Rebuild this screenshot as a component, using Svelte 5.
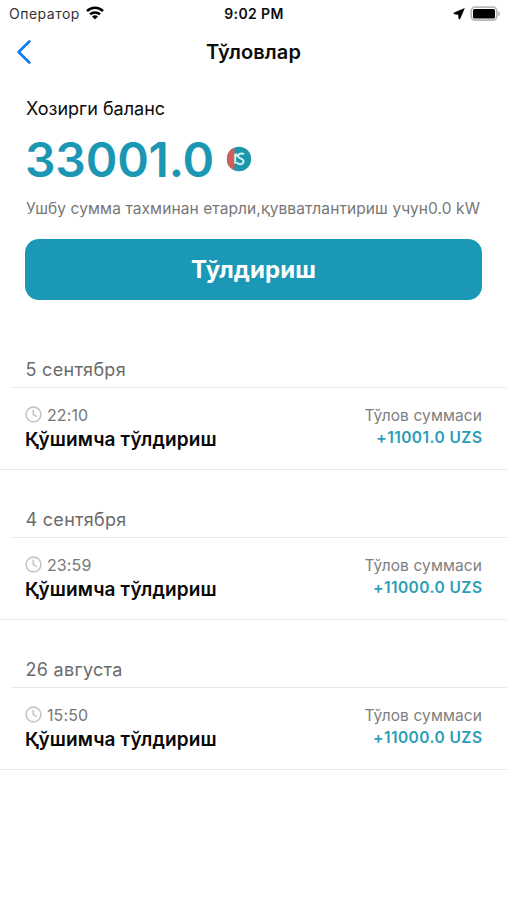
<script>
    const balance = "33001.0";
    const groups = [
        { date: "5 сентября", items: [{ time: "22:10", title: "Қўшимча тўлдириш", amount: "+11001.0 UZS" }] },
        { date: "4 сентября", items: [{ time: "23:59", title: "Қўшимча тўлдириш", amount: "+11000.0 UZS" }] },
        { date: "26 августа", items: [{ time: "15:50", title: "Қўшимча тўлдириш", amount: "+11000.0 UZS" }] }
    ];
</script>

<div class="screen">
    <div class="status-bar">
        <div class="carrier">
            <span>Оператор</span>
            <svg width="18" height="14" viewBox="0 0 18 14" fill="none" stroke="#000" stroke-width="2.5">
                <path d="M1 5.2C5.4 .7 12.6 .7 17 5.2" />
                <path d="M4 8.4C6.8 5.7 11.2 5.7 14 8.4" />
                <path d="M6 10.4C7.8 8.9 10.2 8.9 12 10.4L9 13.4Z" fill="#000" stroke="none" />
            </svg>
        </div>
        <div class="clock">9:02 PM</div>
        <div class="indicators">
            <svg width="12" height="12" viewBox="0 0 12 12">
                <path d="M11.3 .6L1.2 4.8Q.4 5.5 1.2 5.9L5.4 6.5L5.9 10.7Q6.3 11.6 7 10.7Z" fill="#000" stroke="#000" stroke-width=".6" />
            </svg>
            <svg width="31" height="16" viewBox="0 0 31 16">
                <rect x="1.2" y="1.2" width="25.6" height="13" rx="4" fill="#fff" stroke="#b8b8b8" stroke-width="1.8" />
                <rect x="3" y="3.1" width="22" height="9.4" rx="1.6" fill="#000" />
                <path d="M28.2 5.2C30.8 6 30.8 9.4 28.2 10.2Z" fill="#b8b8b8" />
            </svg>
        </div>
    </div>

    <div class="nav-bar">
        <svg class="back" width="18" height="26" viewBox="0 0 18 26">
            <path d="M14.3 2.5L3.6 13L14.3 23.5" fill="none" stroke="#127bf3" stroke-width="2.7" stroke-linecap="round" stroke-linejoin="round" />
        </svg>
        <h1>Тўловлар</h1>
    </div>

    <div class="balance">
        <div class="label">Хозирги баланс</div>
        <div class="value">
            <span>{balance}</span>
            <svg width="26" height="26" viewBox="0 0 26 26">
                <circle cx="13" cy="13" r="12.2" fill="#1b97ac" />
                <path d="M8.5 1.7A12.2 12.2 0 0 0 8.5 24.3Z" fill="#cf5e57" />
                <path d="M9.2 7.5V17.8M9.5 8L12 10.5M18 8.2C14.5 6.4 11.2 8.4 12.5 10.8C13.6 13 17.9 12.3 17.5 15.5C17.2 18.7 12.5 19.2 10.6 16.3" fill="none" stroke="#d9f1f3" stroke-width="1.9" />
            </svg>
        </div>
        <div class="hint">Ушбу сумма тахминан етарли,қувватлантириш учун0.0 kW</div>
        <button>Тўлдириш</button>
    </div>

    {#each groups as group}
    <div class="group">
        <div class="date">{group.date}</div>
        {#each group.items as item}
        <div class="payment">
            <div class="left">
                <div class="time">
                    <svg width="17" height="17" viewBox="0 0 17 17" fill="none" stroke="#c4c4c4" stroke-width="1.6">
                        <circle cx="8.5" cy="8.5" r="7.4" />
                        <path d="M8.3 3.8V8.6L12 10.6" />
                    </svg>
                    <span>{item.time}</span>
                </div>
                <div class="title">{item.title}</div>
            </div>
            <div class="right">
                <div class="caption">Тўлов суммаси</div>
                <div class="amount">{item.amount}</div>
            </div>
        </div>
        {/each}
    </div>
    {/each}
</div>

<style>
    :global(body) {
        margin: 0;
        background: #fff;
    }
    .screen {
        width: 507px;
        height: 900px;
        overflow: hidden;
        background: #fff;
        color: #0c0c0c;
        font-family: Inter, "Liberation Sans", sans-serif;
        white-space: nowrap;
    }
    svg {
        display: block;
        flex: none;
    }
    .status-bar {
        display: grid;
        grid-template-columns: 1fr auto 1fr;
        align-items: center;
        height: 27px;
        padding: 0 6px 0 9px;
    }
    .carrier {
        display: flex;
        align-items: center;
        gap: 6px;
        font-size: 14px;
        line-height: 27px;
        letter-spacing: 0.5px;
        color: #333;
    }
    .carrier svg {
        margin-top: -1px;
    }
    .clock {
        font-size: 14px;
        font-weight: 600;
        line-height: 27px;
        letter-spacing: 0.4px;
        margin-left: -2px;
    }
    .indicators {
        display: flex;
        align-items: center;
        justify-content: flex-end;
        gap: 5px;
    }
    .nav-bar {
        display: grid;
        grid-template-columns: 1fr auto 1fr;
        align-items: center;
        height: 50px;
        padding: 0 15px;
    }
    .back {
        margin-top: -1px;
    }
    h1 {
        margin: 0;
        font-size: 20px;
        font-weight: 600;
        line-height: 50px;
        letter-spacing: 0.1px;
    }
    .balance {
        padding: 19px 25px 0 26px;
    }
    .label {
        font-size: 18px;
        line-height: 26px;
    }
    .value {
        display: flex;
        align-items: center;
        gap: 12px;
        height: 74px;
        margin-left: -1px;
        color: #1b97b4;
        font-size: 48px;
        font-weight: 600;
        letter-spacing: -0.2px;
    }
    .value svg {
        margin-top: -1px;
    }
    .hint {
        padding-top: 1px;
        color: #777;
        font-size: 15.5px;
        line-height: 24px;
        letter-spacing: 0.1px;
    }
    button {
        display: block;
        width: 457px;
        height: 61px;
        margin: 18px 0 0 -1px;
        padding: 0;
        border: 0;
        border-radius: 14px;
        background: #1b98b5;
        color: #fff;
        font-family: inherit;
        font-size: 24px;
        font-weight: 700;
        letter-spacing: 0.1px;
    }
    .group {
        height: 150px;
    }
    .balance + .group {
        margin-top: 20px;
    }
    .date {
        box-sizing: border-box;
        height: 68px;
        margin-left: 11px;
        padding: 37px 0 0 14.5px;
        border-bottom: 1px solid #e8e8e8;
        color: #6b6b6b;
        font-size: 18px;
        line-height: 26px;
        letter-spacing: 0.3px;
    }
    .payment {
        display: flex;
        box-sizing: border-box;
        justify-content: space-between;
        height: 82px;
        padding: 17px 25px 0 25px;
        border-bottom: 1px solid #e8e8e8;
    }
    .time {
        display: flex;
        align-items: center;
        gap: 5px;
        height: 22px;
        color: #777;
        font-size: 16px;
        line-height: 20px;
        letter-spacing: 0.1px;
    }
    .time svg {
        margin-top: -3px;
    }
    .time span {
        margin-top: -2px;
    }
    .title {
        color: #080808;
        font-size: 19px;
        font-weight: 600;
        line-height: 26px;
        letter-spacing: 0.15px;
    }
    .right {
        text-align: right;
    }
    .caption {
        color: #808080;
        font-size: 15.5px;
        line-height: 22px;
        letter-spacing: 0.1px;
    }
    .amount {
        color: #2a9db6;
        font-size: 15.5px;
        font-weight: 600;
        line-height: 22px;
        letter-spacing: 0.45px;
        margin-right: -0.45px;
    }
</style>
